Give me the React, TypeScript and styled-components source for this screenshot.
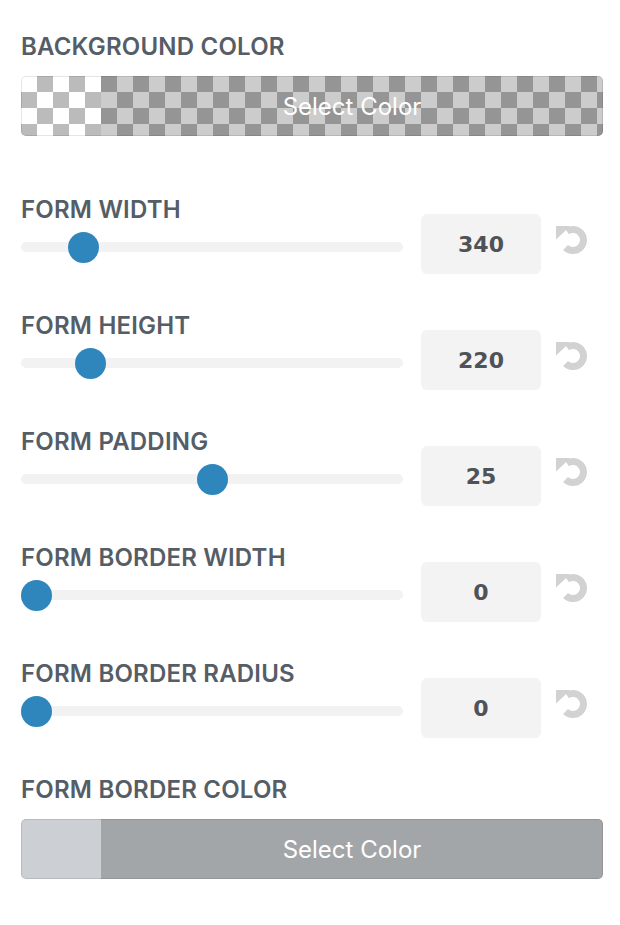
import React from 'react';
import styled, { createGlobalStyle } from 'styled-components';

const GlobalStyle = createGlobalStyle`
  * { box-sizing: border-box; }
  body {
    margin: 0;
    background: #ffffff;
    font-family: Inter, "Noto Sans", sans-serif;
  }
`;

const Panel = styled.div`
  display: flex;
  flex-direction: column;
  padding: 34px 17px 40px 21px;
`;

const Label = styled.div`
  font-size: 24px;
  line-height: 26px;
  font-weight: 600;
  letter-spacing: 0.2px;
  color: #555d66;
  white-space: nowrap;
`;

const ColorSection = styled.div<{ $top: number }>`
  display: flex;
  flex-direction: column;
  gap: 16px;
  margin-top: ${(p) => p.$top}px;
`;

const ColorButton = styled.button<{ $color?: string }>`
  display: flex;
  height: 60px;
  padding: 0;
  border: none;
  border-radius: 5px;
  overflow: hidden;
  cursor: pointer;
  box-shadow: inset 0 0 0 1px rgba(0, 0, 0, 0.1);
  background: ${(p) =>
    p.$color
      ? p.$color
      : 'conic-gradient(#bbbbbb 0 25%, #ffffff 0 50%, #bbbbbb 0 75%, #ffffff 0) 0 0 / 32px 32px'};
`;

const Swatch = styled.span`
  width: 80px;
  flex-shrink: 0;
`;

const ButtonText = styled.span`
  flex: 1;
  display: flex;
  align-items: center;
  justify-content: center;
  background: rgba(0, 0, 0, 0.2);
  color: #ffffff;
  font-family: Inter, "Noto Sans", sans-serif;
  font-size: 24px;
  font-weight: 400;
`;

const SliderRow = styled.div<{ $top: number }>`
  display: flex;
  align-items: flex-end;
  padding-right: 16px;
  margin-top: ${(p) => p.$top}px;
`;

const SliderColumn = styled.div`
  flex: 1;
  display: flex;
  flex-direction: column;
`;

const Slider = styled.div`
  position: relative;
  height: 30px;
  margin: 9px 0 12px;
`;

const Track = styled.div`
  position: absolute;
  left: 0;
  right: 0;
  top: 10px;
  height: 10px;
  border-radius: 5px;
  background: #f2f2f2;
`;

const Thumb = styled.div`
  position: absolute;
  top: -0.5px;
  width: 31px;
  height: 31px;
  border-radius: 50%;
  background: #2e86bc;
`;

const ValueBox = styled.div`
  width: 120px;
  height: 60px;
  margin-left: 18px;
  display: flex;
  align-items: center;
  justify-content: center;
  border-radius: 6px;
  background: #f3f3f3;
  font-family: "DejaVu Sans", Verdana, sans-serif;
  font-weight: 700;
  font-size: 22px;
  color: #4f5358;
`;

const ResetButton = styled.button`
  width: 32px;
  height: 32px;
  margin: 0 0 17px 14px;
  padding: 0;
  border: none;
  background: transparent;
  color: #d2d2d2;
  cursor: pointer;

  svg {
    display: block;
    width: 32px;
    height: 32px;
  }
`;

// rotate-left: thick arc plus a corner arrowhead at the top left
const RotateIcon = () => (
  <svg viewBox="0 0 32 32">
    <path
      d="M11.98 6.4A10.5 10.5 0 1 1 10.58 22.42"
      fill="none"
      stroke="currentColor"
      strokeWidth="7"
    />
    <path d="M1 1H15.5L1 14.5Z" fill="currentColor" />
  </svg>
);

interface SliderProps {
  label: string;
  value: number;
  min: number;
  max: number;
  top: number;
}

const RangeControl: React.FC<SliderProps> = ({ label, value, min, max, top }) => {
  const frac = (value - min) / (max - min);
  return (
    <SliderRow $top={top}>
      <SliderColumn>
        <Label>{label}</Label>
        <Slider>
          <Track />
          <Thumb style={{ left: `calc((100% - 30px) * ${frac})` }} />
        </Slider>
      </SliderColumn>
      <ValueBox>{value}</ValueBox>
      <ResetButton aria-label="Reset">
        <RotateIcon />
      </ResetButton>
    </SliderRow>
  );
};

const ColorControl: React.FC<{ label: string; color?: string; top: number }> = ({
  label,
  color,
  top,
}) => (
  <ColorSection $top={top}>
    <Label>{label}</Label>
    <ColorButton $color={color}>
      <Swatch />
      <ButtonText>Select Color</ButtonText>
    </ColorButton>
  </ColorSection>
);

const sliders = [
  { label: 'FORM WIDTH', value: 340, min: 200, max: 1250 },
  { label: 'FORM HEIGHT', value: 220, min: 100, max: 880 },
  { label: 'FORM PADDING', value: 25, min: 0, max: 50 },
  { label: 'FORM BORDER WIDTH', value: 0, min: 0, max: 20 },
  { label: 'FORM BORDER RADIUS', value: 0, min: 0, max: 50 },
];

export default function App() {
  return (
    <>
      <GlobalStyle />
      <Panel>
        <ColorControl label="BACKGROUND COLOR" top={0} />
        {sliders.map((s, i) => (
          <RangeControl key={s.label} {...s} top={i === 0 ? 61 : 39} />
        ))}
        <ColorControl label="FORM BORDER COLOR" color="#ccd0d4" top={39} />
      </Panel>
    </>
  );
}
